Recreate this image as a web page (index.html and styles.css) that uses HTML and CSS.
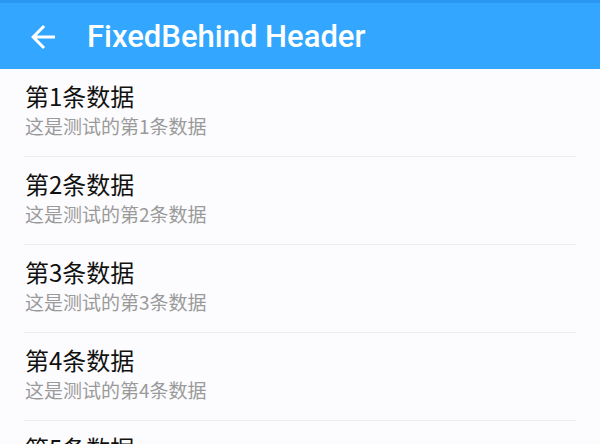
FILE: index.html
```html
<!DOCTYPE html>
<html lang="zh">
<head>
<meta charset="utf-8">
<link rel="stylesheet" href="styles.css">
</head>
<body>
<div class="status"></div>
<header class="bar">
  <svg class="back" viewBox="0 0 24 24" width="36" height="36"><path d="M20 11H7.83l5.59-5.59L12 4l-8 8 8 8 1.41-1.41L7.83 13H20v-2z" fill="#fff"/></svg>
  <h1 class="title">FixedBehind Header</h1>
</header>
<ul class="list">
  <li class="item"><div class="t">第1条数据</div><div class="s">这是测试的第1条数据</div></li>
  <li class="item"><div class="t">第2条数据</div><div class="s">这是测试的第2条数据</div></li>
  <li class="item"><div class="t">第3条数据</div><div class="s">这是测试的第3条数据</div></li>
  <li class="item"><div class="t">第4条数据</div><div class="s">这是测试的第4条数据</div></li>
  <li class="item"><div class="t">第5条数据</div><div class="s">这是测试的第5条数据</div></li>
</ul>
</body>
</html>
```
FILE: styles.css
```css
html, body {
  margin: 0;
  padding: 0;
  background: #fcfcfe;
  overflow: hidden;
  height: 444px;
}
body {
  font-family: Roboto, "Noto Sans CJK SC", sans-serif;
}
.status {
  height: 3px;
  background: #2a98f2;
}
.bar {
  height: 66px;
  background: #33a7ff;
  display: flex;
  align-items: center;
  padding: 1px 0 0 25px;
  box-sizing: border-box;
}
.back {
  display: block;
  flex: none;
}
.title {
  margin: 0 0 0 26px;
  color: #fff;
  font-size: 31px;
  font-weight: 500;
  line-height: 36px;
}
.list {
  list-style: none;
  margin: 0;
  padding: 0 24px;
}
.item {
  height: 88px;
  box-sizing: border-box;
  border-bottom: 1px solid #ececee;
  padding: 11px 1px 0;
}
.t {
  font-size: 24px;
  line-height: 32px;
  color: #111;
  font-family: "Noto Sans CJK SC", sans-serif;
}
.s {
  font-size: 19px;
  line-height: 24px;
  color: #9a9a9a;
  font-family: "Noto Sans CJK SC", sans-serif;
  margin-top: 2px;
}
```
